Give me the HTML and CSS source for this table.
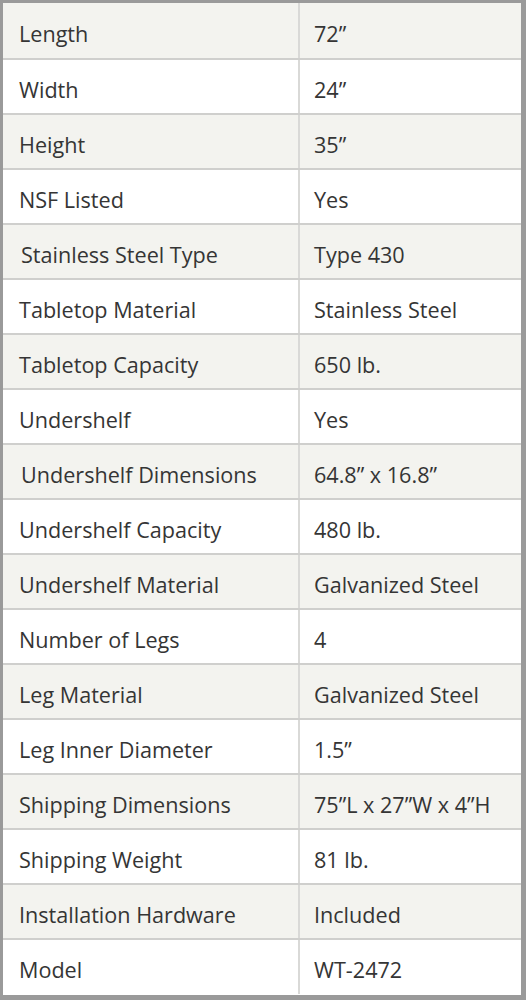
FILE: index.html
```html
<!DOCTYPE html>
<html lang="en">
<head>
<meta charset="utf-8">
<title>Specifications</title>
<link rel="stylesheet" href="styles.css">
</head>
<body>
<div class="frame">
<table class="specs">
<tbody>
<tr class="shade"><td class="k">Length</td><td class="v">72”</td></tr>
<tr><td class="k">Width</td><td class="v">24”</td></tr>
<tr class="shade"><td class="k">Height</td><td class="v">35”</td></tr>
<tr><td class="k">NSF Listed</td><td class="v">Yes</td></tr>
<tr class="shade"><td class="k indent">Stainless Steel Type</td><td class="v">Type 430</td></tr>
<tr><td class="k">Tabletop Material</td><td class="v">Stainless Steel</td></tr>
<tr class="shade"><td class="k">Tabletop Capacity</td><td class="v">650 lb.</td></tr>
<tr><td class="k">Undershelf</td><td class="v">Yes</td></tr>
<tr class="shade"><td class="k indent">Undershelf Dimensions</td><td class="v">64.8” x 16.8”</td></tr>
<tr><td class="k">Undershelf Capacity</td><td class="v">480 lb.</td></tr>
<tr class="shade"><td class="k">Undershelf Material</td><td class="v">Galvanized Steel</td></tr>
<tr><td class="k">Number of Legs</td><td class="v">4</td></tr>
<tr class="shade"><td class="k">Leg Material</td><td class="v">Galvanized Steel</td></tr>
<tr><td class="k">Leg Inner Diameter</td><td class="v">1.5”</td></tr>
<tr class="shade"><td class="k">Shipping Dimensions</td><td class="v">75”L x 27”W x 4”H</td></tr>
<tr><td class="k">Shipping Weight</td><td class="v">81 lb.</td></tr>
<tr class="shade"><td class="k">Installation Hardware</td><td class="v">Included</td></tr>
<tr class="last"><td class="k">Model</td><td class="v">WT-2472</td></tr>
</tbody>
</table>
</div>
</body>
</html>
```

FILE: styles.css
```css
html, body {
  margin: 0;
  padding: 0;
  background: #ffffff;
}

.frame {
  width: 526px;
  height: 1000px;
  box-sizing: border-box;
  border-top: 3px solid #9a9a9a;
  border-left: 3px solid #9a9a9a;
  border-right: 5px solid #9a9a9a;
  border-bottom: 5px solid #9a9a9a;
  overflow: hidden;
}

.specs {
  width: 100%;
  border-collapse: collapse;
  table-layout: fixed;
  font-family: "Open Sans", "Liberation Sans", sans-serif;
  font-size: 21.6px;
  color: #353535;
}

.specs tr {
  height: 55px;
}

.specs tr:first-child {
  height: 56px;
}

.specs tr.shade {
  background: #f3f3ef;
}

.specs td {
  padding: 6px 0 0 0;
  border-bottom: 2px solid #cfcfcd;
  white-space: nowrap;
  vertical-align: middle;
  line-height: 1;
}

.specs tr.last td {
  border-bottom: none;
}

.specs td.k {
  width: 296px;
  padding-left: 16px;
  border-right: 2px solid #d9d9d7;
  box-sizing: border-box;
}

.specs td.k.indent {
  padding-left: 18px;
}

.specs td.v {
  padding-left: 14px;
}
```
